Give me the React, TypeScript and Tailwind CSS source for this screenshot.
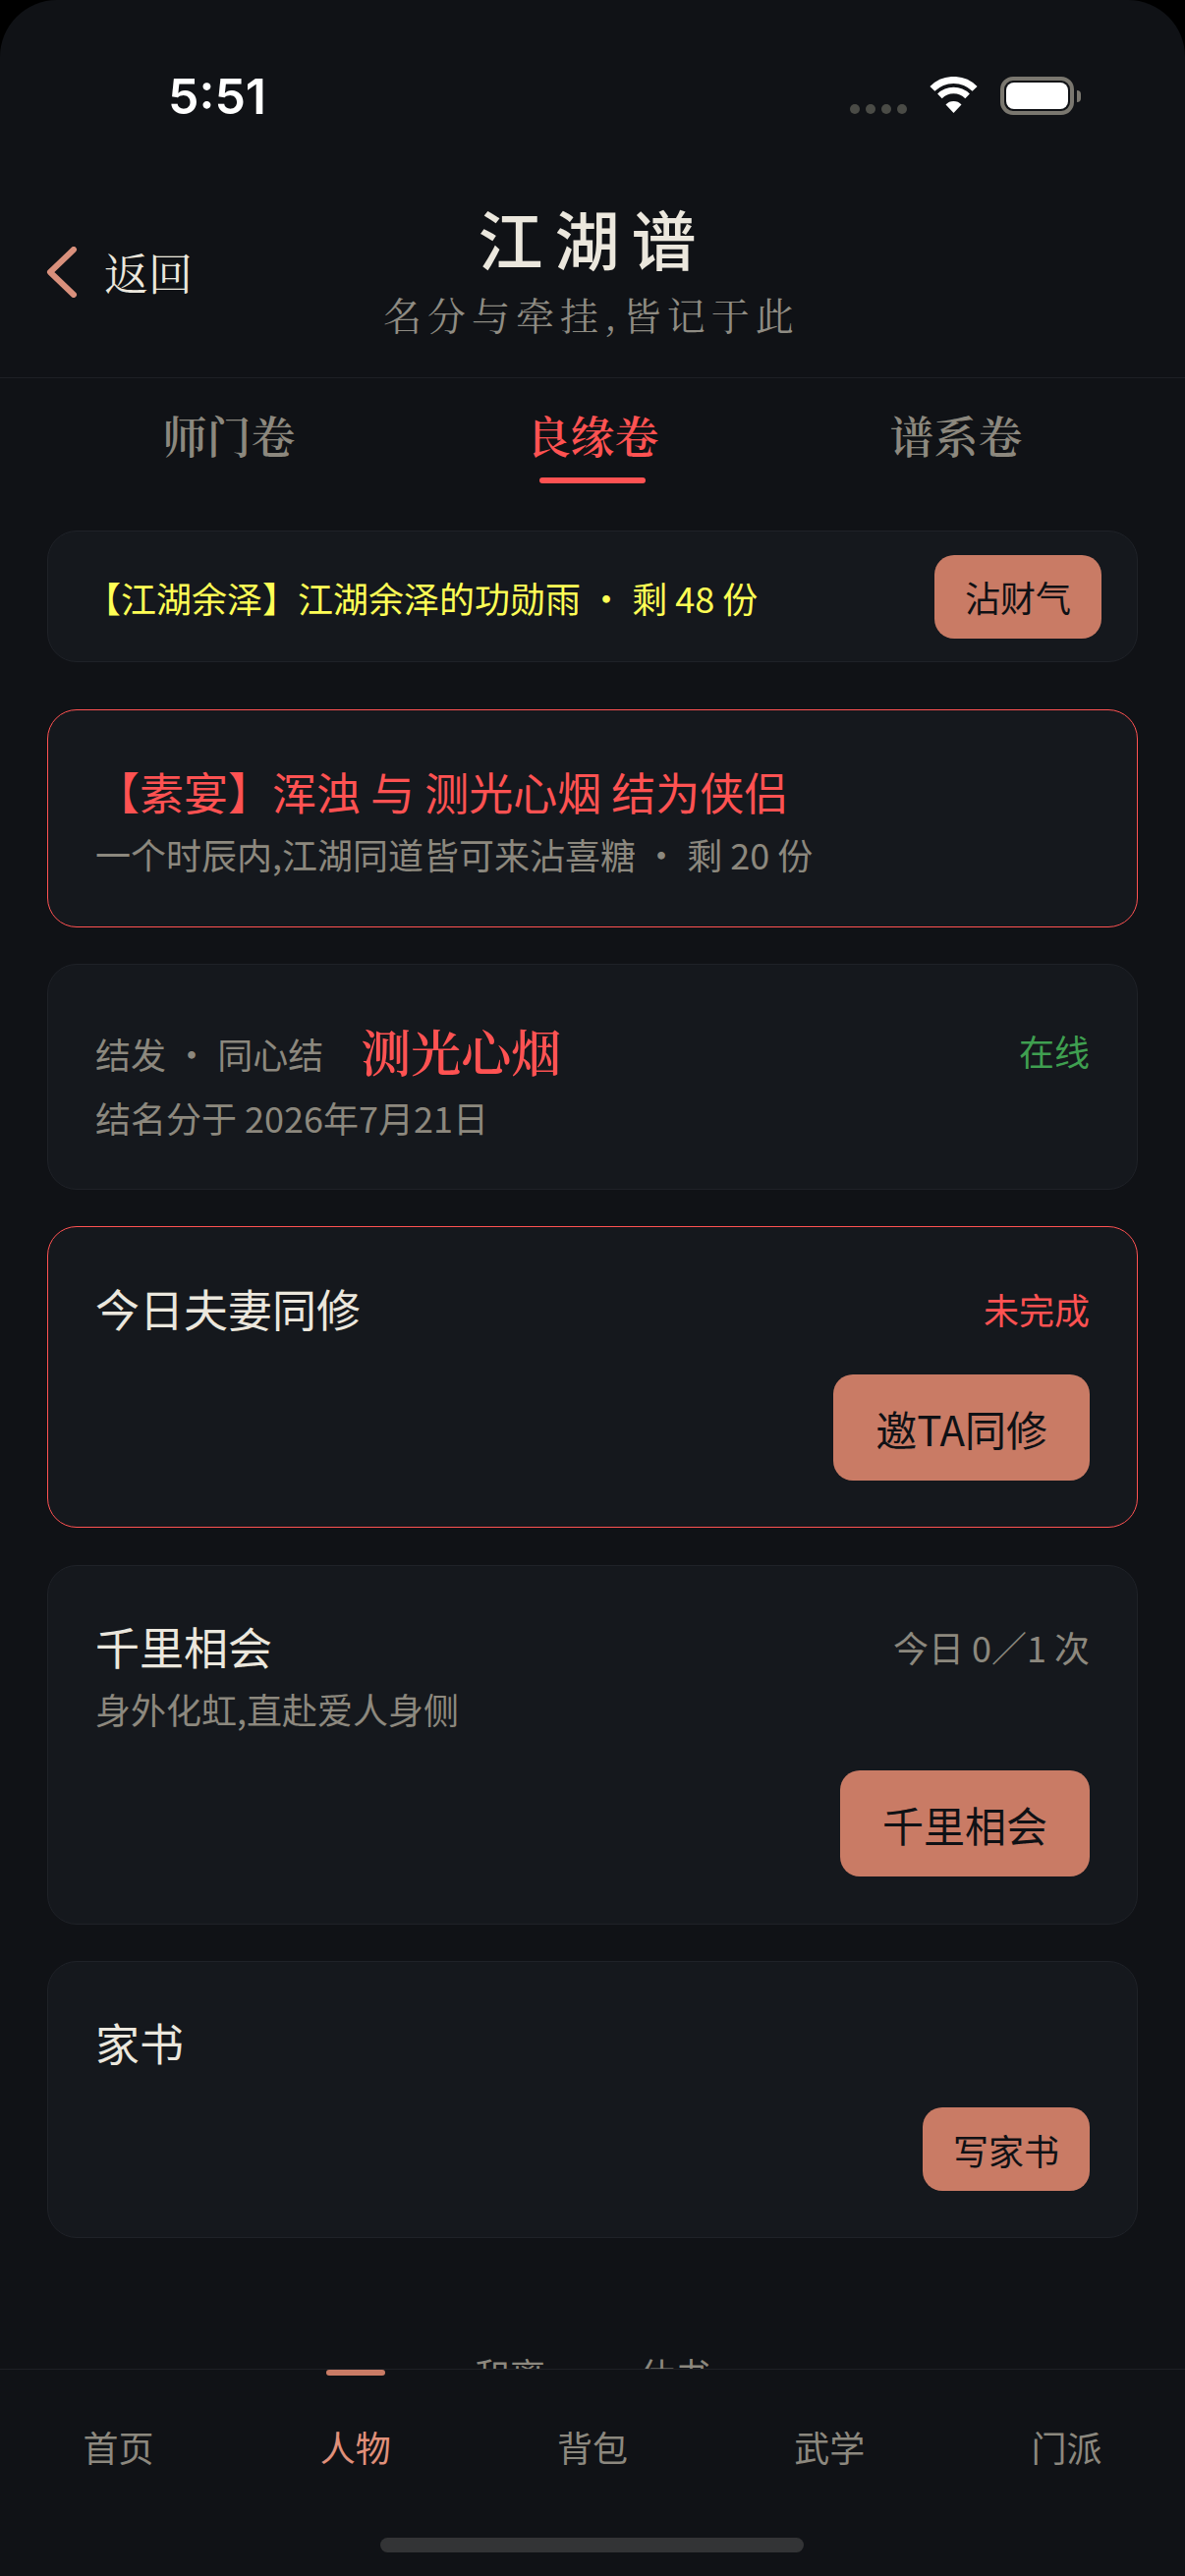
const sans = "font-['Noto_Sans_CJK_SC','Noto_Sans',sans-serif]";
const serif = "font-['Noto_Serif_CJK_SC','Noto_Sans_CJK_SC',serif]";

const tabs = [
  { label: '师门卷', active: false },
  { label: '良缘卷', active: true },
  { label: '谱系卷', active: false },
];

const navItems = [
  { label: '首页', active: false },
  { label: '人物', active: true },
  { label: '背包', active: false },
  { label: '武学', active: false },
  { label: '门派', active: false },
];

function StatusBar() {
  return (
    <div className="flex h-[150px] items-start justify-between pl-[171px] pr-[106px] pt-[68px]">
      <span className="font-['Inter',sans-serif] text-[50px] leading-[60px] font-semibold text-white">5:51</span>
      <div className="flex items-start pt-[10px]">
        <div className="mt-[28px] mr-[22px] flex gap-[6px]">
          {[0, 1, 2, 3].map(i => (
            <span key={i} className="h-[10px] w-[10px] rounded-full bg-[#4a4b46]" />
          ))}
        </div>
        <svg width="51" height="37" viewBox="0 0 51 37" className="mr-[22px]">
          <path d="M3.9 12.4 A30.5 30.5 0 0 1 47.1 12.4" fill="none" stroke="#fff" strokeWidth="7" />
          <path d="M11.4 19.9 A20 20 0 0 1 39.6 19.9" fill="none" stroke="#fff" strokeWidth="6.5" />
          <path d="M25.5 37 L17.5 28.5 A11 11 0 0 1 33.5 28.5 Z" fill="#fff" />
        </svg>
        <div className="flex items-center">
          <div className="h-[39px] w-[75px] rounded-[13px] border-[4px] border-[#7a776f] p-[2px]">
            <div className="h-full w-full rounded-[8px] bg-white" />
          </div>
          <span className="ml-[3px] h-[12px] w-[4px] rounded-r-full bg-[#7a776f]" />
        </div>
      </div>
    </div>
  );
}

function Header() {
  return (
    <header className="grid grid-cols-[1fr_auto_1fr] items-center border-b border-[#1e2025] pt-[49px] pb-[40px]">
      <div className="flex items-center pt-[10px] pl-[47px]">
        <svg width="32" height="52" viewBox="0 0 32 52" className="mr-[27px]">
          <path d="M28 3 L4 26 L28 49" fill="none" stroke="#d9907c" strokeWidth="6" strokeLinecap="round" strokeLinejoin="round" />
        </svg>
        <span className={`${serif} text-[45px] leading-[56px] text-[#ebe7dd]`}>返回</span>
      </div>
      <div className="flex flex-col items-center">
        <h1 className={`${sans} pl-[1px] text-[66px] leading-[84px] font-medium tracking-[12px] text-[#ebe7dd]`}>江湖谱</h1>
        <p className={`${serif} mt-[11px] pr-[2px] text-[39px] leading-[50px] tracking-[6px] text-[#8f8c83]`}>名分与牵挂,皆记于此</p>
      </div>
      <div />
    </header>
  );
}

function Tabs() {
  return (
    <div className="grid grid-cols-3 px-12 pt-[29px]">
      {tabs.map(t => (
        <div key={t.label} className="flex flex-col items-center">
          <span className={`${serif} text-[45px] leading-[58px] font-semibold ${t.active ? 'text-[#ff5252]' : 'text-[#8c887e]'}`}>
            {t.label}
          </span>
          <span className={`mt-[14px] h-[6px] w-[108px] rounded-full ${t.active ? 'bg-[#ff5252]' : 'bg-transparent'}`} />
        </div>
      ))}
    </div>
  );
}

function ActionButton({ label, big }: { label: string; big?: boolean }) {
  return (
    <button
      className={`${sans} flex items-center justify-center bg-[#c97b65] text-[#0f1115] ${
        big ? 'h-[108px] rounded-[20px] px-[43px] text-[42px]' : 'h-[85px] rounded-[20px] px-[31px] text-[36px]'
      }`}
    >
      {label}
    </button>
  );
}

function App() {
  return (
    <div className="h-[2622px] w-[1206px] overflow-hidden bg-black">
      <div className={`${sans} flex h-full flex-col rounded-t-[58px] bg-[#101216]`}>
        <StatusBar />
        <Header />
        <Tabs />

        <main className="flex min-h-0 flex-1 flex-col overflow-hidden px-12 pt-[48px]">
          <section className="flex items-center justify-between rounded-[30px] border border-[#1f2228] bg-[#15181d] py-[23.5px] pr-[36px] pl-[38px]">
            <span className="pt-[2px] text-[36px] leading-[50px] text-[#ffff55]">【江湖余泽】江湖余泽的功勋雨 · 剩 48 份</span>
            <ActionButton label="沾财气" />
          </section>

          <section className="mt-[48px] rounded-[30px] border border-[#ff5252] bg-[#15181d] px-[48px] pt-[53px] pb-[49px]">
            <p className="text-[45px] leading-[60px] text-[#ff5252]">【素宴】浑浊 与 测光心烟 结为侠侣</p>
            <p className="mt-[8px] text-[36px] leading-[50px] text-[#8c887e]">一个时辰内,江湖同道皆可来沾喜糖 · 剩 20 份</p>
          </section>

          <section className="mt-[37px] rounded-[30px] border border-[#1f2228] bg-[#15181d] px-[48px] pt-[55px] pb-[50px]">
            <div className="flex h-[64px] items-center justify-between">
              <div className="flex items-center">
                <span className="mt-[5px] text-[36px] text-[#8c887e]">结发 · 同心结</span>
                <span className={`${serif} ml-[38px] text-[51px] font-semibold text-[#ff5252]`}>测光心烟</span>
              </div>
              <span className="text-[36px] text-[#3f9f50]">在线</span>
            </div>
            <p className="mt-[13px] text-[36px] leading-[46px] text-[#8c887e]">结名分于 2026年7月21日</p>
          </section>

          <section className="mt-[37px] rounded-[30px] border border-[#ff5252] bg-[#15181d] px-[48px] pt-[53px] pb-[47px]">
            <div className="flex h-[60px] items-center justify-between">
              <span className="text-[45px] text-[#ebe7dd]">今日夫妻同修</span>
              <span className="text-[36px] text-[#ff5252]">未完成</span>
            </div>
            <div className="mt-[37px] flex justify-end">
              <ActionButton label="邀TA同修" big />
            </div>
          </section>

          <section className="mt-[38px] rounded-[30px] border border-[#1f2228] bg-[#15181d] px-[48px] pt-[52px] pb-[48px]">
            <div className="flex h-[60px] items-center justify-between">
              <span className="text-[45px] text-[#ebe7dd]">千里相会</span>
              <span className="text-[36px] text-[#8c887e]">今日 0／1 次</span>
            </div>
            <p className="mt-[10px] text-[36px] leading-[46px] text-[#8c887e]">身外化虹,直赴爱人身侧</p>
            <div className="mt-[40px] flex justify-end">
              <ActionButton label="千里相会" big />
            </div>
          </section>

          <section className="mt-[37px] rounded-[30px] border border-[#1f2228] bg-[#15181d] px-[48px] pt-[52px] pb-[47px]">
            <div className="flex h-[60px] items-center">
              <span className="text-[45px] text-[#ebe7dd]">家书</span>
            </div>
            <div className="mt-[36px] flex justify-end">
              <ActionButton label="写家书" />
            </div>
          </section>

          {/* next row, scrolled behind the tab bar */}
          <div className="mt-[113px] flex gap-[96px] pl-[435px] text-[36px] leading-[50px] text-[#8c887e]">
            <span>和离</span>
            <span>休书</span>
          </div>
        </main>

        <nav className="relative h-[211px] shrink-0 border-t border-[#1e2025] bg-[#101216]">
          <div className="grid grid-cols-5 pt-[53px]">
            {navItems.map(item => (
              <div key={item.label} className="relative flex justify-center">
                {item.active && <span className="absolute top-[-53px] h-[6px] w-[60px] rounded-full bg-[#c97b65]" />}
                <span className={`text-[36px] leading-[50px] ${item.active ? 'text-[#e0907a]' : 'text-[#8c887e]'}`}>{item.label}</span>
              </div>
            ))}
          </div>
          <div className="absolute bottom-[24px] left-[387px] h-[15px] w-[431px] rounded-full bg-[#333436]" />
        </nav>
      </div>
    </div>
  );
}

export default App;
